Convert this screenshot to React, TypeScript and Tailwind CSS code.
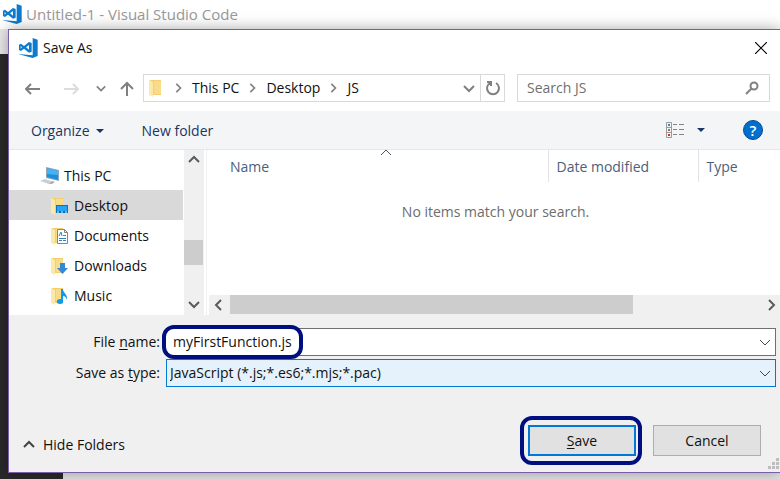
import type { ReactNode } from "react";

function CodeLogo() {
  return (
    <svg className="h-5 w-5 shrink-0" viewBox="0 0 60 60" fill="#0b7bd0" aria-hidden="true">
      <path d="M44 0 59 5V54L44 60 0 48 44 52Z" />
      <path
        fillRule="evenodd"
        d="M33 12 41 15V41L33 44 18 32 9 39 3 36V20L9 17 18 24ZM33 21 24 28 33 35ZM8 24V32L12 28Z"
      />
    </svg>
  );
}

type Direction = "up" | "down" | "left" | "right";

const chevronPaths: Record<Direction, string> = {
  up: "M1 8 6 3 11 8",
  down: "M1 4 6 9 11 4",
  left: "M8 1 3 6 8 11",
  right: "M4 1 9 6 4 11",
};

function Chevron({ to, width = 2, className = "h-3 w-3" }: { to: Direction; width?: number; className?: string }) {
  return (
    <svg className={className} viewBox="0 0 12 12" fill="none" stroke="currentColor" strokeWidth={width} aria-hidden="true">
      <path d={chevronPaths[to]} />
    </svg>
  );
}

function Caret() {
  return (
    <svg className="h-1 w-2" viewBox="0 0 8 4" fill="#1b3564" aria-hidden="true">
      <path d="M0 0H8L4 4Z" />
    </svg>
  );
}

function Folder({ children }: { children?: ReactNode }) {
  return (
    <svg className="h-[18px] w-[18px] shrink-0" viewBox="0 0 18 18" aria-hidden="true">
      <path d="M1 1H12V16H1Z" fill="#f3cf70" />
      <path d="M5 2H12V15H5Z" fill="#f8dc8a" />
      <path d="M0 1 4 3V18L0 16Z" fill="#fce9a9" />
      {children}
    </svg>
  );
}

function ComputerIcon() {
  return (
    <svg className="h-[18px] w-5 shrink-0" viewBox="0 0 20 18" aria-hidden="true">
      <path d="M6 0 19 3V14L6 11Z" fill="#8fa9ba" />
      <path d="M7 1 18 4V13L7 10Z" fill="#1790de" />
      <path d="M7 1 18 4V8L7 7Z" fill="#45b2f2" />
      <path d="M0 14 5 12 14 15 9 17Z" fill="#c9ced2" />
      <path d="M12 14 15 15 12 17 9 17Z" fill="#aab1b6" />
    </svg>
  );
}

const places = [
  {
    name: "Desktop",
    badge: (
      <>
        <path d="M5 8H17V16H5Z" fill="#0873b8" />
        <path d="M6 9H16V14H6Z" fill="#24a5f4" />
        <path d="M6 15H8M10 15H12M14 15H16" stroke="#d7efff" />
      </>
    ),
  },
  {
    name: "Documents",
    badge: (
      <>
        <path d="M6.500 2.500H13.500L16.500 5.500V16.500H6.500Z" fill="#fff" stroke="#858585" />
        <path d="M13.500 2.500V5.500H16.500" fill="none" stroke="#858585" />
        <path d="M8 9 10 5 11 9M12 8.500H15M8 11.500H15M8 13.500H11M12 13.500H15" fill="none" stroke="#2f83c5" />
      </>
    ),
  },
  { name: "Downloads", badge: <path d="M9 6H14V11H17L11.500 17 6 11H9Z" fill="#3488d6" /> },
  {
    name: "Music",
    badge: (
      <>
        <ellipse cx="9" cy="14.500" rx="3.200" ry="2.500" fill="#0f9af0" />
        <path d="M10 2H12C12 6 17 7 16 13 15 10 14 9 12 9V15H10Z" fill="#0f9af0" />
      </>
    ),
  },
];

const crumbs = ["This PC", "Desktop", "JS"];

const iconButton = "flex items-center justify-center text-[#808080]";

function NavigationRow() {
  return (
    <div className="flex h-7 items-stretch pr-[10px]">
      <button aria-label="Back" className={`${iconButton} ml-4 w-4`}>
        <svg className="h-4 w-4" viewBox="0 0 16 16" fill="none" stroke="currentColor" strokeWidth="2" aria-hidden="true">
          <path d="M15 9H1M6 4 1 9 6 14" />
        </svg>
      </button>
      <button aria-label="Forward" className="ml-[22px] flex w-4 items-center justify-center text-[#dcdcdc]">
        <svg className="h-4 w-4" viewBox="0 0 16 16" fill="none" stroke="currentColor" strokeWidth="2" aria-hidden="true">
          <path d="M1 9H15M10 4 15 9 10 14" />
        </svg>
      </button>
      <button aria-label="Recent locations" className={`${iconButton} ml-[17px] w-[10px]`}>
        <Chevron to="down" className="h-[10px] w-[10px]" />
      </button>
      <button aria-label="Up one level" className={`${iconButton} ml-[13px] w-4`}>
        <svg className="h-4 w-4" viewBox="0 0 16 16" fill="none" stroke="currentColor" strokeWidth="2" aria-hidden="true">
          <path d="M8 16V3M2 9 8 3 14 9" />
        </svg>
      </button>
      <nav aria-label="Address" className="ml-2 flex min-w-0 flex-1 items-center border border-[#d9d9d9]">
        <span className="ml-[5px]">
          <Folder />
        </span>
        {crumbs.map((crumb) => (
          <span key={crumb} className="flex items-center">
            <Chevron to="right" className="mr-[7px] ml-[6px] h-[10px] w-[10px] text-[#808080]" />
            <a href="#" className="px-[2px]">{crumb}</a>
          </span>
        ))}
        <button aria-label="Previous locations" className={`${iconButton} mr-[5px] ml-auto`}>
          <Chevron to="down" />
        </button>
        <button aria-label="Refresh" className={`${iconButton} h-full w-6 border-l border-[#d9d9d9]`}>
          <svg className="h-4 w-4" viewBox="0 0 16 16" fill="none" stroke="currentColor" strokeWidth="2" aria-hidden="true">
            <path d="M11 3A6 6 0 1 1 5 3M2 2H6V6" />
          </svg>
        </button>
      </nav>
      <label className="ml-3 flex w-[253px] items-center border border-[#d9d9d9] pr-[10px] pl-[9px]">
        <input aria-label="Search JS" placeholder="Search JS" className="min-w-0 flex-1 outline-none placeholder:text-[#6f6f6f]" />
        <svg className="h-[14px] w-[14px] text-[#808080]" viewBox="0 0 14 14" fill="none" stroke="currentColor" strokeWidth="2" aria-hidden="true">
          <circle cx="9" cy="5" r="3.500" />
          <path d="M6.500 7.500 1 13" />
        </svg>
      </label>
    </div>
  );
}

function Toolbar() {
  return (
    <div className="mt-[9px] flex h-[39px] items-center border-b border-[#e6e7e9] bg-[#f4f5f7] pr-[17px] pl-[22px] text-[#1b3564]">
      <button className="flex items-center gap-[6px] pt-[2px]">
        Organize <Caret />
      </button>
      <button className="ml-[38px] pt-[2px]">New folder</button>
      <button aria-label="Change view" className="ml-auto">
        <svg className="h-4 w-[18px]" viewBox="0 0 18 16" fill="none" aria-hidden="true">
          <path d="M.5 .5H5.500V15.500H.5ZM.5 5.500H5.500M.5 10.500H5.500" stroke="#999" />
          <path d="M7 2.500H11M13 2.500H18M7 7.500H11M13 7.500H18M7 12.500H11M13 12.500H18" stroke="#858585" />
          <path d="M2 2H4V4H2Z" fill="#3b86c6" />
          <path d="M2 7H4V9H2Z" fill="#8a7a5c" />
          <path d="M2 12H4V14H2Z" fill="#dd2a20" />
        </svg>
      </button>
      <button aria-label="More view options" className="ml-[13px]">
        <Caret />
      </button>
      <button
        aria-label="Help"
        className="ml-[38px] flex h-5 w-5 items-center justify-center rounded-full border border-[#064c8c] bg-[#006fd0] text-[15px] font-semibold text-white"
      >
        ?
      </button>
    </div>
  );
}

function FolderTree() {
  return (
    <>
      <ul className="w-[174px] shrink-0 pt-[10px]">
        <li className="flex h-[30px] items-center gap-1 pt-[2px] pl-[31px]">
          <ComputerIcon /> This PC
        </li>
        {places.map((place) => (
          <li
            key={place.name}
            className={`flex h-[30px] items-center gap-[5px] pt-[2px] pl-[42px] ${place.name === "Desktop" ? "bg-[#d9d9d9]" : ""}`}
          >
            <Folder>{place.badge}</Folder> {place.name}
          </li>
        ))}
      </ul>
      <div className="ml-px flex w-5 shrink-0 flex-col items-center bg-[#f0f0f0] text-[#5b5b5b]">
        <button aria-label="Scroll up" className="mt-1">
          <Chevron to="up" />
        </button>
        <div className="mt-auto mr-px h-[25px] w-[19px] bg-[#cdcdcd]" />
        <button aria-label="Scroll down" className="mt-[33px] mb-[5px]">
          <Chevron to="down" />
        </button>
      </div>
    </>
  );
}

function FileList() {
  return (
    <div className="ml-[2px] flex min-w-0 flex-1 flex-col border-l border-[#f0f0f0] pl-[2px]">
      <div className="relative flex-1">
        <table className="w-full table-fixed border-collapse">
          <thead>
            <tr className="h-8 text-left text-[#4c607a]">
              <th className="p-0 pt-[2px] pl-[21px] font-normal">Name</th>
              <th className="w-[150px] border-l border-[#e2e2e2] p-0 pt-[2px] pl-2 font-normal">Date modified</th>
              <th className="w-[82px] border-l border-[#e2e2e2] p-0 pt-[2px] pl-2 font-normal">Type</th>
            </tr>
          </thead>
          <tbody>
            <tr>
              <td colSpan={3} className="p-0 pt-5 pl-[2px] text-center text-[#6d6d6d]">
                No items match your search.
              </td>
            </tr>
          </tbody>
        </table>
        <span className="absolute top-[-3px] left-[171px] text-[#555]">
          <Chevron to="up" width={1} />
        </span>
      </div>
      <div className="flex h-5 items-center bg-[#f0f0f0] text-[#5b5b5b]">
        <button aria-label="Scroll left" className="ml-1">
          <Chevron to="left" />
        </button>
        <div className="mx-[5px] flex-1">
          <div className="mb-px h-[19px] w-[76%] bg-[#cdcdcd]" />
        </div>
        <button aria-label="Scroll right" className="mr-[3px]">
          <Chevron to="right" />
        </button>
      </div>
    </div>
  );
}

function Footer() {
  return (
    <div className="relative bg-[#f0f0f0]">
      <div className="grid grid-cols-[151px_1fr] gap-x-[6px] gap-y-[3px] pt-[13px] pr-1">
        <label htmlFor="file-name" className="flex h-7 items-center justify-end">
          <span>File <u className="underline-offset-2">n</u>ame:</span>
        </label>
        <div className="relative flex h-7 items-center border border-l-0 border-[#707070] bg-white">
          <input id="file-name" defaultValue="myFirstFunction.js" className="min-w-0 flex-1 pl-[7px] outline-none" />
          <button aria-label="Recent file names" className="mr-1 text-[#444]">
            <Chevron to="down" width={1} />
          </button>
          <span className="pointer-events-none absolute -top-1 -left-1 h-[34px] w-[141px] rounded-xl border-4 border-[#000f80]" />
        </div>
        <label htmlFor="save-type" className="flex h-7 items-center justify-end">
          <span>Save as <u className="underline-offset-2">t</u>ype:</span>
        </label>
        <div className="relative">
          <select id="save-type" className="h-7 w-full appearance-none border border-[#0078d7] bg-[#e5f1fb] pl-[3px] outline-none">
            <option>JavaScript (*.js;*.es6;*.mjs;*.pac)</option>
          </select>
          <span className="pointer-events-none absolute top-2 right-[5px] text-[#444]">
            <Chevron to="down" width={1} />
          </span>
        </div>
      </div>
      <div className="mt-[38px] flex items-center gap-[17px] pr-[19px] pb-4 pl-[14px]">
        <button className="mt-2 mr-auto flex items-center gap-2">
          <span className="text-[#444]">
            <Chevron to="up" />
          </span>
          Hide Folders
        </button>
        <div className="relative">
          <button className="h-[31px] w-[108px] border-2 border-[#0078d7] bg-[#e1e1e1]">
            <u className="underline-offset-2">S</u>ave
          </button>
          <span className="pointer-events-none absolute -inset-y-[9px] -right-[6px] -left-2 rounded-xl border-4 border-[#000f80]" />
        </div>
        <button className="h-[31px] w-[108px] border border-[#adadad] bg-[#e1e1e1]">Cancel</button>
      </div>
      <svg className="absolute right-0 bottom-[2px] h-3 w-3" viewBox="0 0 12 12" fill="#bdbdbd" aria-hidden="true">
        <path d="M8 0h3v3H8ZM4 4h3v3H4ZM8 4h3v3H8ZM0 8h3v3H0ZM4 8h3v3H4ZM8 8h3v3H8Z" />
      </svg>
    </div>
  );
}

export default function App() {
  return (
    <div className="flex min-h-screen flex-col overflow-hidden bg-white font-['Open_Sans','Noto_Sans',sans-serif] text-sm leading-5 text-[#111]">
      <header className="flex h-[29px] items-center gap-1 pb-px pl-[2px] text-[15px] text-[#999]">
        <CodeLogo /> Untitled-1 - Visual Studio Code
      </header>
      <div className="flex flex-1">
        <div className="flex w-2 shrink-0 flex-col bg-[#292929]">
          <div className="h-[25px] bg-[#e8e8e8]" />
        </div>
        <section
          role="dialog"
          aria-label="Save As"
          className="relative flex min-w-0 flex-1 flex-col border-y border-l border-[#7b5cab] bg-white shadow-[0_0_14px_rgba(0,0,0,0.35)]"
        >
          <div className="flex h-11 items-start justify-between pt-2 pr-[13px] pl-[9px]">
            <h1 className="flex items-center gap-[5px]">
              <CodeLogo /> Save As
            </h1>
            <button aria-label="Close" className="mt-1 text-black">
              <svg className="h-3 w-3" viewBox="0 0 12 12" fill="none" stroke="currentColor" strokeWidth="1.200" aria-hidden="true">
                <path d="M0 0 12 12M12 0 0 12" />
              </svg>
            </button>
          </div>
          <NavigationRow />
          <Toolbar />
          <div className="flex flex-1">
            <FolderTree />
            <FileList />
          </div>
          <Footer />
        </section>
      </div>
      <div className="flex h-[6px]">
        <div className="w-[63px] bg-[#292929]" />
        <div className="flex-1 bg-[#e4e4e4]" />
      </div>
    </div>
  );
}
